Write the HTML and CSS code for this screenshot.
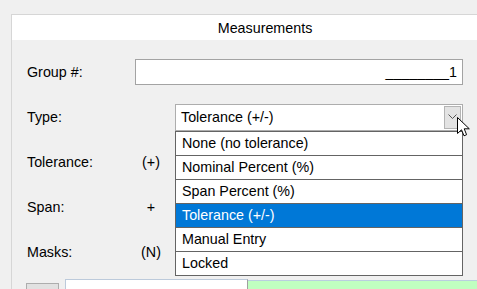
FILE: index.html
```html
<!DOCTYPE html>
<html>
<head>
<meta charset="utf-8">
<link rel="stylesheet" href="styles.css">
</head>
<body>
<div class="panel">
  <div class="header">Measurements</div>
  <div class="body">
    <div class="row">
      <span class="label">Group #:</span>
      <div class="input num">________1</div>
    </div>
    <div class="row">
      <span class="label">Type:</span>
      <div class="combo">
        <span class="combo-text">Tolerance (+/-)</span>
        <span class="combo-btn">
          <svg width="9" height="6" viewBox="0 0 9 6"><path d="M0.5 0.5 L4.5 4.5 L8.5 0.5" fill="none" stroke="#555" stroke-width="1"/></svg>
        </span>
        <ul class="list">
          <li>None (no tolerance)</li>
          <li>Nominal Percent (%)</li>
          <li>Span Percent (%)</li>
          <li class="sel">Tolerance (+/-)</li>
          <li>Manual Entry</li>
          <li>Locked</li>
        </ul>
        <svg class="cursor" width="14" height="21" viewBox="0 0 14 21"><path d="M0.5 0.5 L0.5 16.5 L4.5 12.8 L7 18.8 L9.6 17.7 L7.2 11.8 L12.3 11.8 Z" fill="#fff" stroke="#000" stroke-width="1" stroke-linejoin="miter"/></svg>
      </div>
    </div>
    <div class="row">
      <span class="label">Tolerance:</span>
      <span class="sign">(+)</span>
    </div>
    <div class="row">
      <span class="label">Span:</span>
      <span class="sign">+</span>
    </div>
    <div class="row">
      <span class="label">Masks:</span>
      <span class="sign">(N)</span>
    </div>
    <div class="bottom">
      <div class="sbtn"></div>
      <div class="sinput"></div>
      <div class="green"></div>
    </div>
  </div>
</div>
</body>
</html>
```
FILE: styles.css
```css
html, body {
  margin: 0;
  padding: 0;
}
body {
  background: #f0f0f0;
  width: 477px;
  height: 289px;
  overflow: hidden;
  font-family: "Liberation Sans", Arial, sans-serif;
  font-size: 14.3px;
  color: #000;
}
.panel {
  margin: 14px 0 0 11px;
  border-top: 1px solid #d6d6d6;
  border-left: 1px solid #d6d6d6;
  background: #f0f0f0;
}
.header {
  height: 25px;
  background: #fff;
  display: flex;
  align-items: center;
  justify-content: center;
  padding-left: 41px;
}
.body {
  padding: 19px 0 0 15px;
  display: flex;
  flex-direction: column;
  gap: 19px;
}
.row {
  display: flex;
  align-items: center;
  height: 26px;
}
.label {
  width: 108px;
  flex: none;
}
.input {
  box-sizing: border-box;
  width: 328px;
  height: 26px;
  background: #fff;
  border: 1px solid #a3a3a3;
  display: flex;
  align-items: center;
  justify-content: flex-end;
  padding-right: 5px;
}
.combo {
  position: relative;
  box-sizing: border-box;
  margin-left: 40px;
  width: 288px;
  height: 27px;
  background: #fff;
  border: 1px solid #adadad;
  display: flex;
  align-items: center;
  padding: 0 0 0 5px;
}
.combo-text {
  flex: 1;
}
.combo-btn {
  box-sizing: border-box;
  width: 17px;
  height: 23px;
  margin-right: 1px;
  background: #e3e3e3;
  border: 1px solid #b4b4b4;
  display: flex;
  align-items: center;
  justify-content: center;
}
.list {
  position: absolute;
  left: -1px;
  top: 26px;
  box-sizing: border-box;
  width: 288px;
  margin: 0;
  padding: 0;
  list-style: none;
  background: #fff;
  border: 1px solid #646464;
  z-index: 2;
}
.list li {
  height: 23px;
  line-height: 23px;
  padding-left: 6px;
  border-bottom: 1px solid #646464;
}
.list li:last-child {
  border-bottom: none;
}
.list li.sel {
  background: #0078d7;
  color: #fff;
}
.cursor {
  position: absolute;
  left: 281px;
  top: 12px;
  z-index: 3;
}
.sign {
  width: 20px;
  margin-left: 6px;
  text-align: center;
}
.bottom {
  display: flex;
  align-items: flex-start;
  margin-top: -5px;
  margin-left: -1px;
}
.sbtn {
  box-sizing: border-box;
  width: 33px;
  height: 20px;
  margin-top: 4px;
  background: #e1e1e1;
  border: 1px solid #adadad;
}
.sinput {
  box-sizing: border-box;
  width: 183px;
  height: 20px;
  margin-left: 6px;
  background: #fff;
  border: 1px solid #bccadb;
  border-right-color: #a0a0a0;
}
.green {
  flex: 1;
  height: 20px;
  margin-top: 1px;
  background: #c0ffc0;
  border-top: 1px solid #b9cfe0;
}
```
